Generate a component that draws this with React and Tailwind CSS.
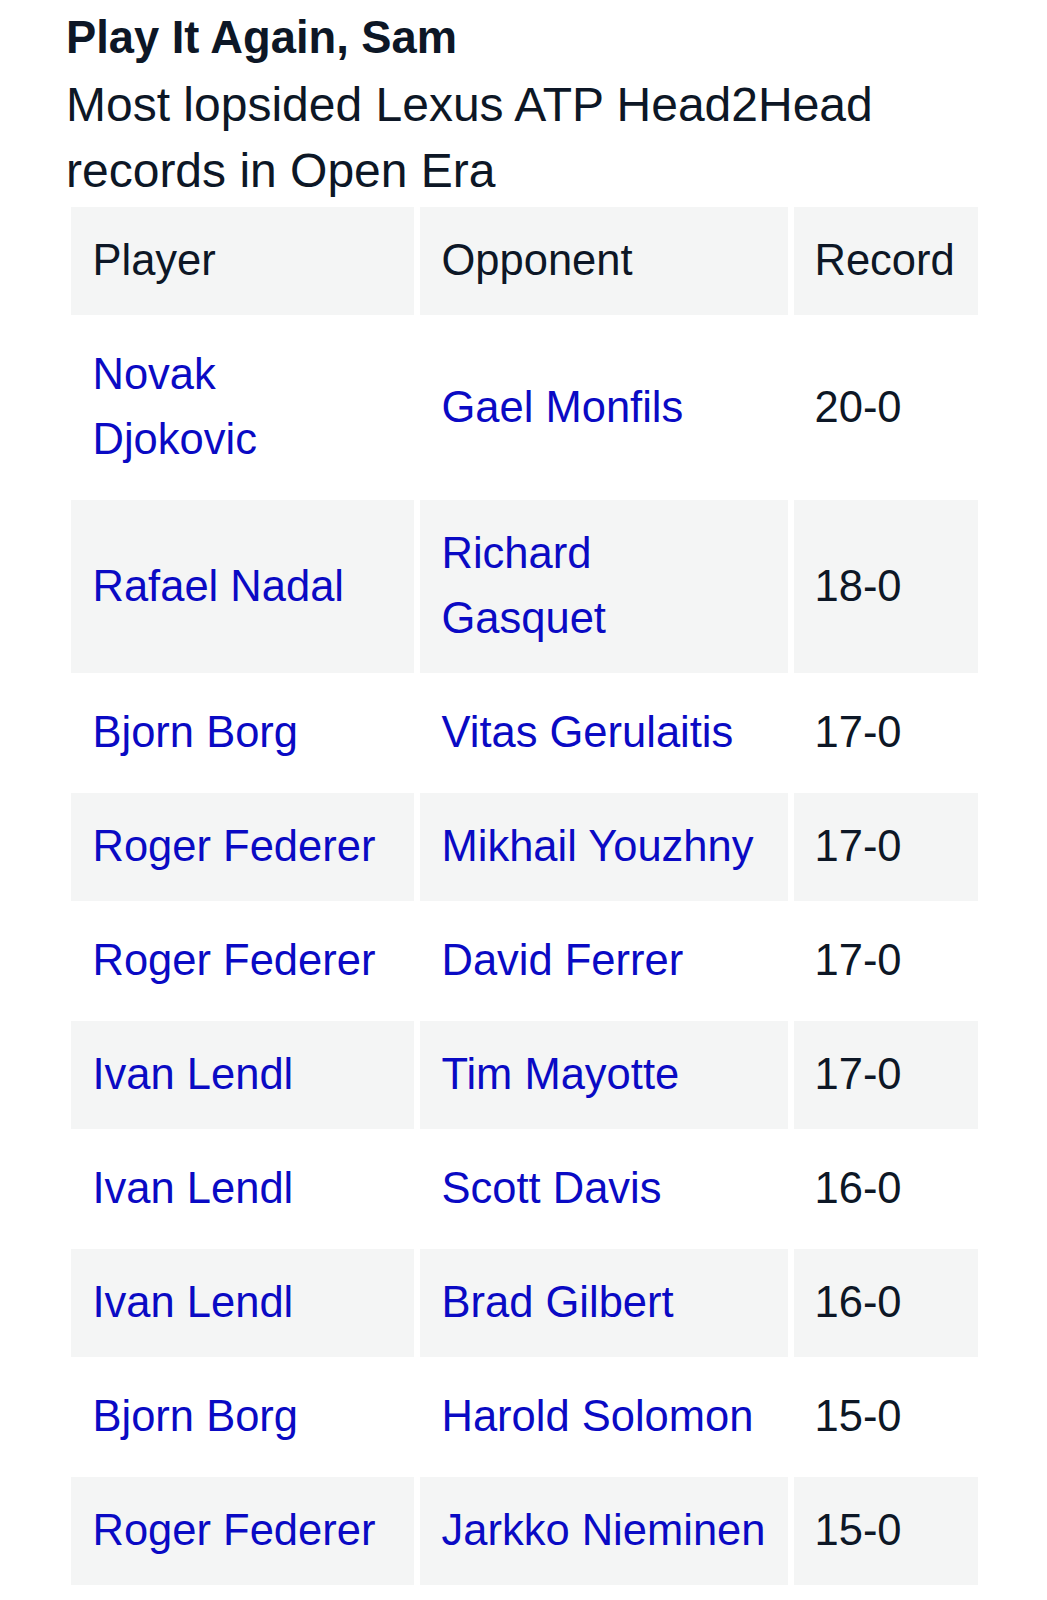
import React from 'react';

const rows = [
    { player: ['Novak', 'Djokovic'], opponent: ['Gael Monfils'], record: '20-0' },
    { player: ['Rafael Nadal'], opponent: ['Richard', 'Gasquet'], record: '18-0' },
    { player: ['Bjorn Borg'], opponent: ['Vitas Gerulaitis'], record: '17-0' },
    { player: ['Roger Federer'], opponent: ['Mikhail Youzhny'], record: '17-0' },
    { player: ['Roger Federer'], opponent: ['David Ferrer'], record: '17-0' },
    { player: ['Ivan Lendl'], opponent: ['Tim Mayotte'], record: '17-0' },
    { player: ['Ivan Lendl'], opponent: ['Scott Davis'], record: '16-0' },
    { player: ['Ivan Lendl'], opponent: ['Brad Gilbert'], record: '16-0' },
    { player: ['Bjorn Borg'], opponent: ['Harold Solomon'], record: '15-0' },
    { player: ['Roger Federer'], opponent: ['Jarkko Nieminen'], record: '15-0' },
];

function Cell({ shaded, children, className = '' }) {
    return (
        <div
            className={`flex items-center px-[22px] py-[21.5px] leading-[65px] whitespace-nowrap ${shaded ? 'bg-[#f4f5f5]' : 'bg-white'} ${className}`}
        >
            <div>{children}</div>
        </div>
    );
}

function Lines({ lines }) {
    return lines.map((line, i) => (
        <React.Fragment key={i}>
            {i > 0 && <br />}
            {line}
        </React.Fragment>
    ));
}

export default function App() {
    return (
        <div className="min-h-[1600px] bg-white text-[#0d1726] pt-[5px]" style={{ fontFamily: '"Liberation Sans", Arial, sans-serif' }}>
            <div className="pl-[66px]">
                <h1 className="text-[45.3px] font-bold leading-[66.5px]">Play It Again, Sam</h1>
                <p className="text-[48px] leading-[66.5px]">
                    Most lopsided Lexus ATP Head2Head
                    <br />
                    records in Open Era
                </p>
            </div>

            <div className="mt-[2px] ml-[70.5px] grid grid-cols-[343px_368px_184px] gap-[6px] text-[43.5px]">
                <Cell shaded>Player</Cell>
                <Cell shaded>Opponent</Cell>
                <Cell shaded className="pl-[21px]">Record</Cell>

                {rows.map((row, i) => {
                    const shaded = i % 2 === 1;
                    return (
                        <React.Fragment key={i}>
                            <Cell shaded={shaded} className="text-[#0a0ac4]">
                                <Lines lines={row.player} />
                            </Cell>
                            <Cell shaded={shaded} className="text-[#0a0ac4]">
                                <Lines lines={row.opponent} />
                            </Cell>
                            <Cell shaded={shaded} className="pl-[21px]">{row.record}</Cell>
                        </React.Fragment>
                    );
                })}
            </div>
        </div>
    );
}
